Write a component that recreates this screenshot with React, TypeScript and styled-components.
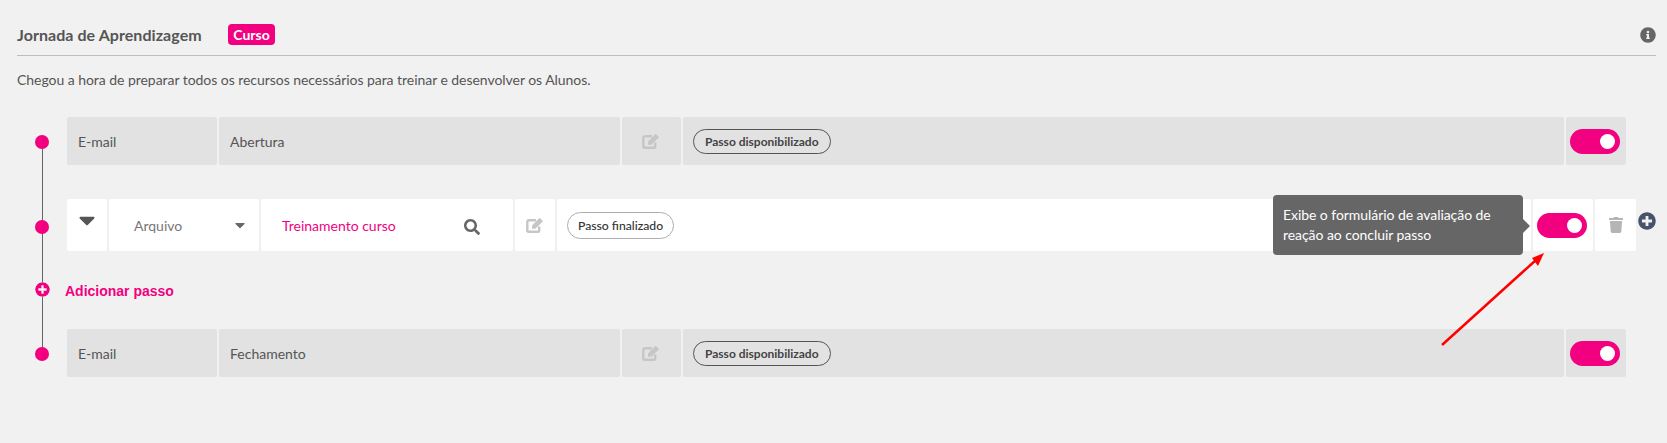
import React from 'react'
import styled, { createGlobalStyle } from 'styled-components'
import { FaCaretDown, FaInfoCircle, FaPlusCircle, FaSearch, FaTrash } from 'react-icons/fa'

const pink = '#f2007f'

const GlobalStyle = createGlobalStyle`
html, body {
  margin: 0;
  padding: 0;
  background: #f1f1f1;
  font-family: Lato, "Open Sans", sans-serif;
  color: #555;
}
* { box-sizing: border-box; }
`

const Page = styled.div`
position: relative;
width: 1667px;
height: 443px;
padding: 24px 11px 0 17px;
overflow: hidden;
`

const Header = styled.div`
display: flex;
align-items: center;
height: 32px;
border-bottom: 1px solid #bdbdbd;
padding-bottom: 10px;
`

const Title = styled.h1`
margin: 0;
font-size: 16px;
font-weight: 700;
letter-spacing: 0.06px;
color: #555;
width: 211px;
`

const Badge = styled.span`
display: flex;
align-items: center;
justify-content: center;
width: 47px;
height: 21px;
border-radius: 4px;
background: ${pink};
color: #fff;
font-size: 14px;
font-weight: 700;
`

const InfoIcon = styled(FaInfoCircle)`
margin-left: auto;
font-size: 16px;
color: #666;
`

const Description = styled.p`
margin: 15px 0 0;
font-size: 14px;
line-height: 18px;
letter-spacing: -0.045px;
color: #555;
`

const Steps = styled.div`
position: relative;
margin-top: 28px;
padding-left: 50px;
display: flex;
flex-direction: column;
&::before {
  content: '';
  position: absolute;
  left: 25px;
  top: 25px;
  bottom: 24px;
  width: 1px;
  background: #666;
}
`

const Row = styled.div<{ $active?: boolean }>`
position: relative;
display: flex;
align-items: stretch;
gap: 2px;
height: ${p => (p.$active ? 52 : 48)}px;
margin-top: ${p => (p.$active ? 34 : 0)}px;
padding-right: ${p => (p.$active ? 0 : 30)}px;
color: ${p => (p.$active ? '#666' : '#555')};
`

const Dot = styled.span<{ $offset: number }>`
position: absolute;
left: -32px;
top: ${p => p.$offset}px;
width: 14px;
height: 14px;
border-radius: 50%;
background: ${pink};
`

const Cell = styled.div<{ $active?: boolean; $w?: number; $center?: boolean }>`
position: relative;
display: flex;
align-items: center;
justify-content: ${p => (p.$center ? 'center' : 'flex-start')};
flex: ${p => (p.$w ? `0 0 ${p.$w}px` : '1 1 0')};
border-radius: 2px;
background: ${p => (p.$active ? '#fff' : '#e2e2e2')};
font-size: 14px;
`

const TypeLabel = styled.span`
padding-left: 11px;
`

const EditCell = styled(Cell)`
padding-right: 2px;
`

const Select = styled(Cell)`
padding: 0 11px 0 25px;
justify-content: space-between;
color: #777;
`

const CourseLink = styled.span`
color: ${pink};
font-size: 14px;
`

const SearchCell = styled(Cell)`
padding: 0 33px 0 21px;
justify-content: space-between;
`

const Pill = styled.span<{ $done?: boolean }>`
display: inline-flex;
align-items: center;
height: ${p => (p.$done ? 27 : 25)}px;
margin-left: 10px;
padding: 0 ${p => (p.$done ? 10 : 11)}px;
border-radius: 14px;
border: 1px solid ${p => (p.$done ? '#adadad' : '#555')};
font-size: ${p => (p.$done ? 12.2 : 12)}px;
font-weight: ${p => (p.$done ? 500 : 700)};
color: ${p => (p.$done ? '#333' : '#444')};
`

const EditGlyph = styled.svg`
width: 18px;
height: 16px;
color: #c6c6c6;
margin-top: -1px;
`

const EditIcon = () => (
  <EditGlyph viewBox="0 0 18 16">
    <path d="M10 3.2H3A1.7 1.7 0 0 0 1.3 4.9v8.8A1.1 1.1 0 0 0 2.4 14.8h9.5a1.3 1.3 0 0 0 1.3-1.3V9.5" fill="none" stroke="currentColor" strokeWidth="2.4" />
    <path d="M6 8.4 13.6.8l3.4 3.4L9.4 11.8H6z" fill="currentColor" />
  </EditGlyph>
)

const ToggleCell = styled(Cell)`
padding-left: 4px;
`

const Toggle = styled.span`
display: flex;
align-items: center;
justify-content: flex-end;
width: 50px;
height: 25px;
padding-right: 5px;
border-radius: 13px;
background: ${pink};
&::after {
  content: '';
  width: 15px;
  height: 15px;
  border-radius: 50%;
  background: #fff;
}
`

const Tooltip = styled.div`
position: absolute;
right: calc(100% + 10px);
top: -4px;
width: 250px;
height: 60px;
padding: 10px;
border-radius: 4px;
background: #666;
color: #fff;
font-size: 14px;
line-height: 20px;
letter-spacing: -0.06px;
&::after {
  content: '';
  position: absolute;
  left: 100%;
  top: 24px;
  border: 7px solid transparent;
  border-left-color: #666;
  border-right: none;
}
`

const Collapse = styled(FaCaretDown)`
font-size: 26px;
color: #555;
margin-top: -10px;
`

const SmallCaret = styled(FaCaretDown)`
font-size: 16px;
color: #666;
`

const SearchIcon = styled(FaSearch)`
font-size: 16px;
color: #666;
margin-top: 4px;
`

const TrashIcon = styled(FaTrash)`
font-size: 16px;
color: #b5b5b5;
`

const AddInline = styled(FaPlusCircle)`
margin-top: 13px;
font-size: 18px;
color: #46536b;
flex: none;
`

const AddStep = styled.div`
position: relative;
display: flex;
align-items: center;
height: 78px;
padding-top: 1px;
margin-left: -2px;
color: ${pink};
font-family: "Liberation Sans", Arial, sans-serif;
font-size: 14px;
font-weight: 700;
`

const AddDot = styled(FaPlusCircle)`
position: absolute;
left: -30px;
top: 31px;
font-size: 15px;
color: ${pink};
background: #f1f1f1;
border-radius: 50%;
`

const Arrow = styled.svg`
position: absolute;
left: 1430px;
top: 245px;
`

const GrayStep: React.FC<{ name: string }> = ({ name }) => (
  <Row>
    <Dot $offset={18} />
    <Cell $w={150}><TypeLabel>E-mail</TypeLabel></Cell>
    <Cell $w={401}><TypeLabel>{name}</TypeLabel></Cell>
    <EditCell $w={59} $center><EditIcon /></EditCell>
    <Cell><Pill>Passo disponibilizado</Pill></Cell>
    <ToggleCell $w={60}><Toggle /></ToggleCell>
  </Row>
)

export default function App() {
  return (
    <Page>
      <GlobalStyle />
      <Header>
        <Title>Jornada de Aprendizagem</Title>
        <Badge>Curso</Badge>
        <InfoIcon />
      </Header>
      <Description>Chegou a hora de preparar todos os recursos necessários para treinar e desenvolver os Alunos.</Description>
      <Steps>
        <GrayStep name="Abertura" />
        <Row $active>
          <Dot $offset={21} />
          <Cell $active $w={40} $center><Collapse /></Cell>
          <Select $active $w={150}>Arquivo<SmallCaret /></Select>
          <SearchCell $active $w={252}>
            <CourseLink>Treinamento curso</CourseLink>
            <SearchIcon />
          </SearchCell>
          <Cell $active $w={40} $center><EditIcon /></Cell>
          <Cell $active><Pill $done>Passo finalizado</Pill></Cell>
          <ToggleCell $active $w={60}>
            <Tooltip>Exibe o formulário de avaliação de reação ao concluir passo</Tooltip>
            <Toggle />
          </ToggleCell>
          <Cell $active $w={41} $center><TrashIcon /></Cell>
          <AddInline />
        </Row>
        <AddStep>
          <AddDot />
          Adicionar passo
        </AddStep>
        <GrayStep name="Fechamento" />
      </Steps>
      <Arrow width="120" height="110" viewBox="0 0 120 110">
        <line x1="12" y1="100" x2="106" y2="15" stroke="#f00" strokeWidth="2.5" />
        <polygon points="114,8 102,13 108,21" fill="#f00" />
      </Arrow>
    </Page>
  )
}
